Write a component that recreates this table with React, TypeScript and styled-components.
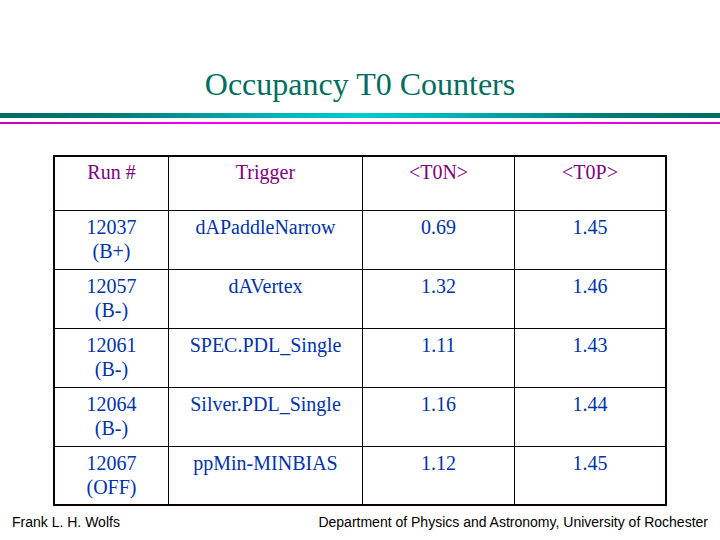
import React from 'react';
import styled, { createGlobalStyle } from 'styled-components';

const GlobalStyle = createGlobalStyle`
  html, body {
    margin: 0;
    padding: 0;
    background: #ffffff;
  }
`;

const COLORS = {
  teal: '#006d5f',
  purple: '#800080',
  blue: '#0033a8',
  rule: '#110000',
};

const Slide = styled.div`
  width: 720px;
  height: 540px;
  display: flex;
  flex-direction: column;
  background: #ffffff;
  overflow: hidden;
  font-family: 'Liberation Serif', 'Times New Roman', serif;
`;

const Title = styled.h1`
  margin: 68px 0 0;
  font-size: 32px;
  line-height: 32px;
  font-weight: 400;
  text-align: center;
  color: ${COLORS.teal};
`;

const Rules = styled.div`
  display: flex;
  flex-direction: column;
  gap: 4px;
  margin-top: 13px;
`;

const TealRule = styled.div`
  height: 5px;
  background: linear-gradient(
    90deg,
    #006a66 0%,
    #007a76 15%,
    #00b4b4 38%,
    #00cccc 50%,
    #00b4b4 62%,
    #007a76 85%,
    #006a66 100%
  );
`;

const PinkRule = styled.div`
  height: 2px;
  background: linear-gradient(
    90deg,
    #c000c0 0%,
    #f000f0 30%,
    #ff00ff 50%,
    #f400f4 75%,
    #d000d0 100%
  );
`;

const Table = styled.div`
  margin: 31px 0 0 53px;
  width: 610px;
  display: grid;
  grid-template-columns: 113px 193px 151px 150px;
  grid-template-rows: 53px 58px 58px 58px 58px 57px;
  gap: 1px;
  background: ${COLORS.rule};
  border: 2px solid ${COLORS.rule};
`;

const Cell = styled.div<{ $head?: boolean }>`
  background: #ffffff;
  padding-top: ${(p) => (p.$head ? 3 : 4)}px;
  text-align: center;
  font-size: 20px;
  line-height: 24px;
  color: ${(p) => (p.$head ? COLORS.purple : COLORS.blue)};
`;

const Footer = styled.div`
  display: flex;
  justify-content: space-between;
  margin-top: 8px;
  padding: 0 12px;
  font-family: 'Liberation Sans', Arial, sans-serif;
  font-size: 14px;
  line-height: 16px;
  color: #000000;
`;

const headers = ['Run #', 'Trigger', '<T0N>', '<T0P>'];

const rows = [
  { run: '12037', mode: '(B+)', trigger: 'dAPaddleNarrow', t0n: '0.69', t0p: '1.45' },
  { run: '12057', mode: '(B-)', trigger: 'dAVertex', t0n: '1.32', t0p: '1.46' },
  { run: '12061', mode: '(B-)', trigger: 'SPEC.PDL_Single', t0n: '1.11', t0p: '1.43' },
  { run: '12064', mode: '(B-)', trigger: 'Silver.PDL_Single', t0n: '1.16', t0p: '1.44' },
  { run: '12067', mode: '(OFF)', trigger: 'ppMin-MINBIAS', t0n: '1.12', t0p: '1.45' },
];

export default function App() {
  return (
    <>
      <GlobalStyle />
      <Slide>
        <Title>Occupancy T0 Counters</Title>
        <Rules>
          <TealRule />
          <PinkRule />
        </Rules>
        <Table>
          {headers.map((h) => (
            <Cell key={h} $head>
              {h}
            </Cell>
          ))}
          {rows.map((r) => (
            <React.Fragment key={r.run}>
              <Cell>
                {r.run}
                <br />
                {r.mode}
              </Cell>
              <Cell>{r.trigger}</Cell>
              <Cell>{r.t0n}</Cell>
              <Cell>{r.t0p}</Cell>
            </React.Fragment>
          ))}
        </Table>
        <Footer>
          <span>Frank L. H. Wolfs</span>
          <span>Department of Physics and Astronomy, University of Rochester</span>
        </Footer>
      </Slide>
    </>
  );
}
